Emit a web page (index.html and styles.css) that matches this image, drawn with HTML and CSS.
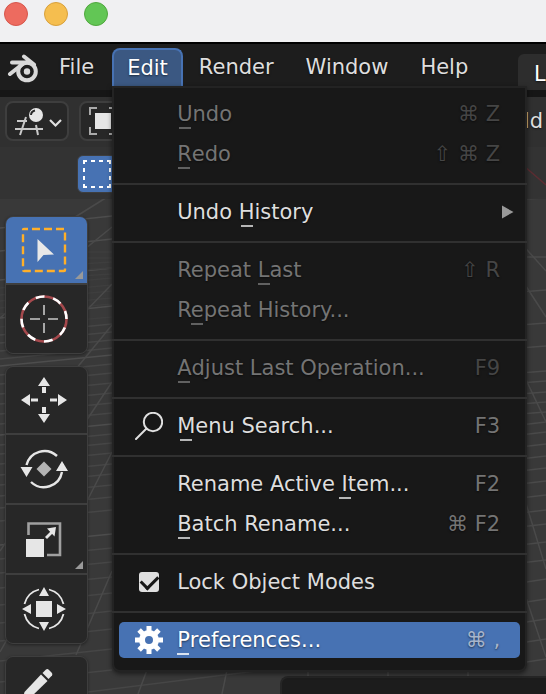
FILE: index.html
```html
<!DOCTYPE html>
<html lang="en">
<head>
<meta charset="utf-8">
<title>Blender</title>
<link rel="stylesheet" href="styles.css">
</head>
<body>
<div class="window">
  <div class="titlebar">
    <button class="light close" aria-label="Close"></button>
    <button class="light minimize" aria-label="Minimize"></button>
    <button class="light zoom" aria-label="Zoom"></button>
  </div>

  <nav class="menubar" aria-label="Main menu">
    <button class="logo" aria-label="Blender">
      <svg width="32" height="30" viewBox="0 0 32 30" fill="none" stroke="#d8d8d8" stroke-linecap="round" stroke-linejoin="round">
        <circle cx="20" cy="17.500" r="8.800" stroke-width="4"/>
        <circle cx="20" cy="17.500" r="3.200" fill="#d8d8d8" stroke="none"/>
        <path d="M5 8.500H20M17 2.500L27 10.500M3 20L17 9" stroke-width="4"/>
      </svg>
    </button>
    <button class="top-item">File</button>
    <div class="open-menu">
      <button class="top-item active" aria-expanded="true">Edit</button>
      <div class="dropdown" role="menu">
        <button class="item" disabled><span class="icon"></span><span class="label"><span class="key">U</span>ndo</span><span class="shortcut">⌘ Z</span></button>
        <button class="item" disabled><span class="icon"></span><span class="label"><span class="key">R</span>edo</span><span class="shortcut">⇧ ⌘ Z</span></button>
        <hr>
        <button class="item submenu"><span class="icon"></span><span class="label">Undo <span class="key">H</span>istory</span><svg width="12" height="14" viewBox="0 0 12 14"><path d="M0 0.500L11.500 7L0 13.500Z" fill="#999"/></svg></button>
        <hr>
        <button class="item" disabled><span class="icon"></span><span class="label">Repeat <span class="key">L</span>ast</span><span class="shortcut">⇧ R</span></button>
        <button class="item" disabled><span class="icon"></span><span class="label">R<span class="key">e</span>peat History...</span></button>
        <hr>
        <button class="item" disabled><span class="icon"></span><span class="label"><span class="key">A</span>djust Last Operation...</span><span class="shortcut">F9</span></button>
        <hr>
        <button class="item"><span class="icon"><svg width="28" height="28" viewBox="0 0 28 28" fill="none" stroke="#e0e0e0" stroke-width="2" stroke-linecap="round"><circle cx="18" cy="10" r="9.200"/><path d="M11.500 16.500L1 27"/></svg></span><span class="label"><span class="key">M</span>enu Search...</span><span class="shortcut">F3</span></button>
        <hr>
        <button class="item"><span class="icon"></span><span class="label">Rename Active <span class="key">I</span>tem...</span><span class="shortcut">F2</span></button>
        <button class="item"><span class="icon"></span><span class="label"><span class="key">B</span>atch Rename...</span><span class="shortcut">⌘ F2</span></button>
        <hr>
        <label class="item"><span class="icon"><input type="checkbox" checked></span><span class="label">Lock Object Modes</span></label>
        <hr>
        <button class="item selected"><span class="icon"><svg width="28" height="28" viewBox="0 0 28 28"><g fill="none" stroke="#fff"><circle cx="14" cy="14" r="7" stroke-width="6"/><path d="M14 0V6M14 22V28M0 14H6M22 14H28M4.100 4.100L8.500 8.500M19.500 19.500L23.900 23.900M23.900 4.100L19.500 8.500M8.500 19.500L4.100 23.900" stroke-width="5"/></g></svg></span><span class="label"><span class="key">P</span>references...</span><span class="shortcut">⌘ ,</span></button>
      </div>
    </div>
    <button class="top-item">Render</button>
    <button class="top-item">Window</button>
    <button class="top-item">Help</button>
    <button class="workspace">L</button>
  </nav>

  <main class="editor">
    <svg class="grid" viewBox="0 0 546 597" preserveAspectRatio="xMinYMin slice" fill="none" stroke="#4a4a4a" stroke-width="1.500" aria-hidden="true">
      <path d="M0 131L112 119M0 154L112 142M0 183L112 171M0 221L112 209M0 269L112 258M0 338L112 327M0 448L112 437" stroke="#4d4d4d"/>
      <path d="M0 238L112 227M0 246L112 235M0 254L112 243M0 262L112 251M0 278L112 267M0 287L112 276M0 297L112 286M0 307L112 296M0 317L112 306M0 327L112 316M0 348L112 337M0 357L112 346M0 367L112 356M0 378L112 367M0 388L112 377M0 399L112 388M0 411L112 400M0 424L112 413M0 462L112 451M0 476L112 465M0 491L112 480M0 508L112 496M0 526L112 514M0 544L112 532M0 564L112 552M0 585L112 573M0 606L280 571" stroke="#464646"/>
      <path d="M0 191L112 181M0 198L112 188M0 204L112 194M0 211L112 201M0 217L112 207M0 230L112 220M80 161H112M80 167L112 165M80 173L112 171M80 179L112 177M80 155H112" stroke="#3e3e3e"/>
      <path d="M72 122L112 97M0 221L112 130M84 216L112 187M30 328L112 228M0 454L112 285M84 410L112 355M76 558L112 474M138 597L147 573M222 597L227 573M308 597V573M388 597V573M468 597V573M0 555L14 530"/>
      <path d="M520 102L546 101M520 160H546M520 195L546 193M520 228L546 226M520 251L546 249M520 276L546 274M520 286L546 284M520 297L546 295M520 307L546 305M520 317L546 315M520 328L546 325M520 338L546 335M520 350L546 347M520 362L546 359M520 374L546 371M520 387L546 384M520 401L546 398M520 416L546 413M520 430L546 427M520 448L546 445M520 466L546 463M520 486L546 482M520 506L546 502M520 526L546 522M520 546L546 542M520 566L546 562"/>
      <path d="M520 145L546 174M520 180L546 220M520 270L546 325M524 400L546 472M524 495L546 560"/>
    </svg>

    <div class="header">
      <button class="field" aria-label="Editor type">
        <svg width="48" height="32" viewBox="0 0 48 32" fill="none">
          <path d="M0 24H28M2 16H12M5 30L11 12M21 20L23 30" stroke="#c9c9c9" stroke-width="2"/>
          <circle cx="21" cy="10" r="7" fill="#e6e6e6"/><path d="M16 10A5 5 0 0 1 20 5.500" stroke="#292929" stroke-width="2"/>
          <path d="M35 15L40.500 20.500L46 15" stroke="#e0e0e0" stroke-width="2.200"/>
        </svg>
      </button>
      <button class="field mode" aria-label="Object mode">
        <svg width="28" height="28" viewBox="0 0 28 28"><path d="M1 8V1H8M20 1H27V8M27 20V27H20M8 27H1V20" fill="none" stroke="#aaa" stroke-width="2"/><path d="M6 6H22V22H6Z" fill="#e6e6e6"/></svg>
      </button>
      <button class="header-menu">Add</button>
    </div>
    <div class="tool-settings">
      <button class="select-mode" aria-label="Set selection">
        <svg width="28" height="28" viewBox="0 0 28 28" fill="none" stroke="#fff" stroke-width="2"><path d="M0 1H4M8 1H12M16 1H20M24 1H28M0 27H4M8 27H12M16 27H20M24 27H28M1 0V4M1 8V12M1 16V20M1 24V28M27 0V4M27 8V12M27 16V20M27 24V28"/></svg>
      </button>
      <svg class="axis" width="26" height="24" viewBox="0 0 26 24"><path d="M4 3L26 22" stroke="#5c2d32" stroke-width="1.500"/></svg>
    </div>

    <div class="toolbar">
      <div class="group">
        <button class="tool current expandable" aria-label="Select box">
          <svg width="50" height="50" viewBox="0 0 50 50"><rect x="4" y="4" width="42" height="42" rx="1" fill="none" stroke="#ffaf29" stroke-width="2.400" stroke-dasharray="8 4" stroke-dashoffset="4"/><path d="M18.500 14V37L24.500 30L35 29.500Z" fill="#e8e8e8"/></svg>
        </button>
        <button class="tool" aria-label="Cursor">
          <svg width="50" height="50" viewBox="0 0 50 50" fill="none"><circle cx="25" cy="25" r="22.500" stroke="#a5494d" stroke-width="2.600"/><circle cx="25" cy="25" r="22.500" stroke="#fff" stroke-width="2.600" stroke-dasharray="8.836 8.836" stroke-dashoffset="9"/><path d="M25 11V21M25 29V39M11 25H21M29 25H39" stroke="#c8c8c8" stroke-width="1.600"/></svg>
        </button>
      </div>
      <div class="group">
        <button class="tool" aria-label="Move">
          <svg width="50" height="50" viewBox="0 0 50 50" fill="#e6e6e6"><path d="M25 2L31 11H19ZM25 48L31 39H19ZM2 25L11 19V31ZM48 25L39 19V31Z"/><path d="M23 12H27V18H23ZM23 32H27V38H23ZM12 23.500H19V26.500H12ZM31 23.500H38V26.500H31Z"/></svg>
        </button>
        <button class="tool" aria-label="Rotate">
          <svg width="50" height="50" viewBox="0 0 50 50"><path d="M7.500 21A18.500 18.500 0 0 1 38 12M43 28A18.500 18.500 0 0 1 12 38" fill="none" stroke="#e6e6e6" stroke-width="2.400"/><path d="M1.500 23H13.500L7.500 33ZM37 27H49L43 17Z" fill="#e6e6e6"/><path d="M25 17.500L32.500 25L25 32.500L17.500 25Z" fill="#b4b4b4"/></svg>
        </button>
        <button class="tool expandable" aria-label="Scale">
          <svg width="50" height="50" viewBox="0 0 50 50"><path d="M9.500 21V9.500H41V41H28" fill="none" stroke="#a0a0a0" stroke-width="2.600"/><path d="M7 25H25V43H7Z" fill="#e6e6e6"/><path d="M27 24L33 18" stroke="#e6e6e6" stroke-width="2.800"/><path d="M28 14.500L37 13L35.500 22.500Z" fill="#e6e6e6"/></svg>
        </button>
        <button class="tool" aria-label="Transform">
          <svg width="50" height="50" viewBox="0 0 50 50"><path d="M20 5.500A20 20 0 0 0 5.500 20M30 5.500A20 20 0 0 1 44.500 20M5.500 30A20 20 0 0 0 20 44.500M44.500 30A20 20 0 0 1 30 44.500" fill="none" stroke="#e6e6e6" stroke-width="1.800"/><path d="M17 17H33V33H17ZM25 3L30 12H20ZM25 47L30 38H20ZM3 25L12 20V30ZM47 25L38 20V30Z" fill="#e6e6e6"/></svg>
        </button>
      </div>
      <div class="group">
        <button class="tool" aria-label="Annotate">
          <svg width="50" height="50" viewBox="0 0 50 50" fill="#e6e6e6"><path d="M22 9.500L28.500 16L11 33L3 36L5.500 27Z"/><path d="M23.500 8L27 4.500Q28.500 3.500 30 5L32.500 7.500Q34 9 33 10.500L29.500 14Z"/></svg>
        </button>
      </div>
    </div>
  </main>
  <section class="lower-panel" aria-label="Timeline"></section>
</div>
</body>
</html>
```
FILE: styles.css
```css
* { box-sizing: border-box; }

body {
  margin: 0;
  background: #393939;
  color: #dedede;
  font-family: "DejaVu Sans", sans-serif;
  font-size: 21px;
  line-height: 26px;
}

button {
  margin: 0;
  padding: 0;
  border: 0;
  background: none;
  color: inherit;
  font: inherit;
  text-shadow: 0 1px 2px #0008;
}

svg { display: block; flex: none; }

.window {
  display: flex;
  flex-direction: column;
  height: 100vh;
  overflow: hidden;
}

.titlebar {
  display: flex;
  flex: none;
  gap: 16px;
  height: 42px;
  padding: 2px 4px;
  background: #f0f0f2;
}

.light {
  width: 24px;
  height: 24px;
  border: 1px solid;
  border-radius: 50%;
}
.close { background: #ed6b5f; border-color: #d6564c; }
.minimize { background: #f5be4f; border-color: #d8a03c; }
.zoom { background: #62c655; border-color: #50a73e; }

.menubar {
  display: flex;
  flex: none;
  position: relative;
  z-index: 2;
  height: 55px;
  padding-top: 4px;
  border-top: 2px solid #000;
  border-bottom: 7px solid #161616;
  background: #1d1d1d;
}

.logo {
  width: 37px;
  height: 38px;
  margin-right: 6px;
  padding: 4px 0 0 7px;
}

.top-item {
  height: 38px;
  padding: 0 16px;
}
.top-item.active {
  padding: 0 13px;
  border: 2px solid #4772b3;
  border-bottom: 0;
  border-radius: 8px 8px 0 0;
  background: #3b5882;
  color: #fff;
}

.workspace {
  width: 28px;
  height: 36px;
  margin: 6px 0 0 auto;
  padding: 4px 0 0 16px;
  border-radius: 6px 0 0;
  background: #2d2d2d;
  color: #fff;
  text-align: left;
}

.open-menu {
  position: relative;
  margin-left: 2px;
}

.dropdown {
  display: flex;
  flex-direction: column;
  position: absolute;
  top: 38px;
  left: 0;
  width: 415px;
  padding: 8px 0 12px;
  border: 2px solid #232323;
  border-radius: 0 0 8px 8px;
  background: #181818;
  box-shadow: 0 2px 5px #0008;
}

.dropdown hr {
  height: 2px;
  margin: 11px -2px 9px;
  border: 0;
  background: #303030;
}

.item {
  display: flex;
  align-items: center;
  height: 36px;
  margin: 0 5px;
  padding: 0 20px 0 16px;
  border-radius: 5px;
  color: #dedede;
  text-align: left;
  white-space: nowrap;
}
.item + .item { margin-top: 4px; }
.item:disabled { color: #747474; }
.item.submenu { padding-right: 6px; }
.item.selected {
  background: #4772b3;
  color: #fff;
}

.icon {
  display: flex;
  justify-content: center;
  flex: none;
  width: 28px;
  margin-right: 14px;
}
.label { flex: 1; }

.key { position: relative; }
.key::after {
  content: "";
  position: absolute;
  bottom: -3px;
  left: 50%;
  width: 12px;
  height: 2px;
  margin-left: -6px;
  background: currentColor;
  opacity: 0.8;
}

.shortcut { color: #747474; }
.item:disabled .shortcut { color: #454545; }
.selected .shortcut { color: #a6b4ca; }

.item input {
  appearance: none;
  display: grid;
  place-items: center;
  width: 20px;
  height: 20px;
  margin: 0;
  border-radius: 3px;
  background: #e0e0e0;
}
.item input:checked::before {
  content: "";
  width: 14px;
  height: 8px;
  margin-bottom: 4px;
  border: solid #181818;
  border-width: 0 0 3px 3px;
  transform: rotate(-45deg);
}

.editor {
  position: relative;
  flex: 1;
  min-height: 0;
}

.grid {
  position: absolute;
  top: 0;
  left: 0;
  width: 100%;
  height: 597px;
}

.header,
.tool-settings {
  display: flex;
  position: relative;
  background: #303030;
}
.header {
  align-items: center;
  gap: 10px;
  padding: 4px 3px 6px 5px;
}
.tool-settings {
  justify-content: space-between;
  padding: 8px 0 6px 77px;
  background: #333333f0;
}

.field {
  display: flex;
  align-items: center;
  width: 64px;
  height: 40px;
  padding: 0 8px;
  border: 2px solid #3e3e3e;
  border-radius: 8px;
  background: #272727;
}
.header-menu { margin-left: auto; }

.select-mode {
  display: grid;
  place-items: center;
  width: 40px;
  height: 38px;
  border: 1px solid #3e3e3e;
  border-radius: 6px;
  background: #4772b3;
}

.axis { margin-top: 8px; }

.toolbar {
  display: flex;
  flex-direction: column;
  gap: 12px;
  position: relative;
  width: 83px;
  margin: 17px 0 0 5px;
}
.group {
  display: grid;
  gap: 2px;
  overflow: hidden;
  border: 1px solid #3e3e3e;
  border-radius: 8px;
  background: #3e3e3e;
  box-shadow: 0 1px 3px #0006;
}
.tool {
  display: grid;
  place-items: center;
  position: relative;
  height: 68px;
  background: #272727;
}
.tool > svg { margin-left: -6px; }
.tool:first-child { height: 66px; }
.tool.current { background: #4772b3; }
.expandable::after {
  content: "";
  position: absolute;
  right: 4px;
  bottom: 4px;
  border: solid transparent;
  border-width: 4px;
  border-right-color: #999;
  border-bottom-color: #999;
}

.lower-panel {
  flex: none;
  position: relative;
  height: 18px;
  margin-left: 280px;
  border: solid #252525;
  border-width: 2px 0 0 2px;
  border-radius: 8px 0 0;
  background: #1c1c1c;
}
```
